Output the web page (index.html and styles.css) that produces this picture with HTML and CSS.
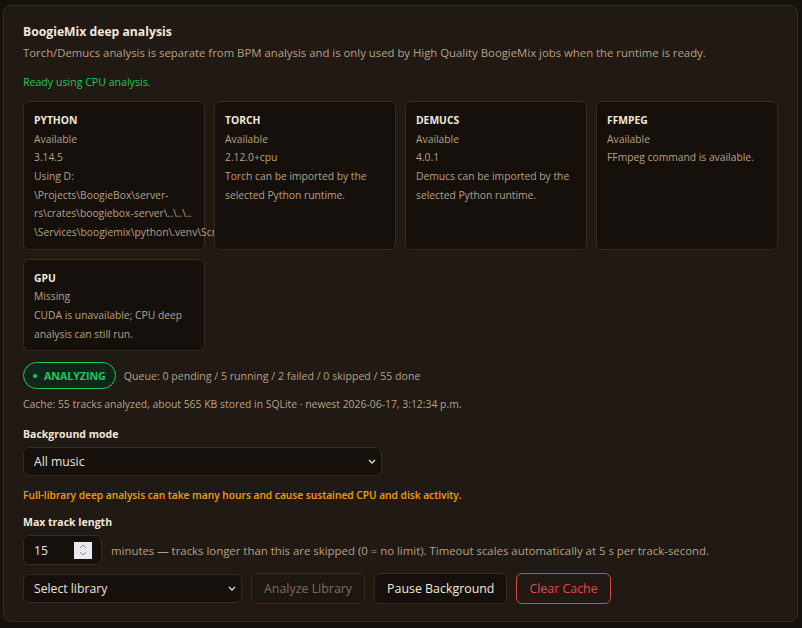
FILE: index.html
```html
<!DOCTYPE html>
<html lang="en">
<head>
  <meta charset="UTF-8">
  <meta name="viewport" content="width=device-width, initial-scale=1.0">
  <title>BoogieMix deep analysis</title>
  <link rel="stylesheet" href="styles.css">
</head>
<body>
<div class="page">
  <section class="panel">
    <h2 class="panel-title">BoogieMix deep analysis</h2>
    <p class="panel-desc">Torch/Demucs analysis is separate from BPM analysis and is only used by High Quality BoogieMix jobs when the runtime is ready.</p>
    <p class="ready">Ready using CPU analysis.</p>

    <div class="deps">
      <div class="dep">
        <div class="dep-name">PYTHON</div>
        <div>Available</div>
        <div>3.14.5</div>
        <div>Using D:<wbr>\Projects\BoogieBox\server-<wbr>rs\crates\boogiebox-server\..\..\..<wbr>\Services\boogiemix\python\.venv\Scripts\python.exe</div>
      </div>
      <div class="dep">
        <div class="dep-name">TORCH</div>
        <div>Available</div>
        <div>2.12.0+cpu</div>
        <div>Torch can be imported by the selected Python runtime.</div>
      </div>
      <div class="dep">
        <div class="dep-name">DEMUCS</div>
        <div>Available</div>
        <div>4.0.1</div>
        <div>Demucs can be imported by the selected Python runtime.</div>
      </div>
      <div class="dep">
        <div class="dep-name">FFMPEG</div>
        <div>Available</div>
        <div>FFmpeg command is available.</div>
      </div>
      <div class="dep">
        <div class="dep-name">GPU</div>
        <div>Missing</div>
        <div>CUDA is unavailable; CPU deep analysis can still run.</div>
      </div>
    </div>

    <div class="status-row">
      <span class="badge"><span class="dot"></span>ANALYZING</span>
      <span class="queue">Queue: 0 pending / 5 running / 2 failed / 0 skipped / 55 done</span>
    </div>
    <p class="cache">Cache: 55 tracks analyzed, about 565 KB stored in SQLite · newest 2026-06-17, 3:12:34 p.m.</p>

    <label class="field-label">Background mode</label>
    <div class="select-wrap mode-select">
      <select>
        <option>All music</option>
      </select>
      <svg class="chev" width="8" height="5" viewBox="0 0 8 5"><path d="M1 1l3 3 3-3" fill="none" stroke="currentColor" stroke-width="1.3"/></svg>
    </div>
    <p class="warning">Full-library deep analysis can take many hours and cause sustained CPU and disk activity.</p>

    <label class="field-label field-label--tight">Max track length</label>
    <div class="length-row">
      <div class="number-box">
        <input type="text" value="15">
        <span class="spin">
          <svg width="10" height="14" viewBox="0 0 10 14"><path d="M2 5l3-3 3 3M2 9l3 3 3-3" fill="none" stroke="#8d8d96" stroke-width="1"/></svg>
        </span>
      </div>
      <span class="hint">minutes — tracks longer than this are skipped (0 = no limit). Timeout scales automatically at 5 s per track-second.</span>
    </div>

    <div class="actions">
      <div class="select-wrap lib-select">
        <select>
          <option>Select library</option>
        </select>
        <svg class="chev" width="8" height="5" viewBox="0 0 8 5"><path d="M1 1l3 3 3-3" fill="none" stroke="currentColor" stroke-width="1.3"/></svg>
      </div>
      <button class="btn" disabled>Analyze Library</button>
      <button class="btn">Pause Background</button>
      <button class="btn danger">Clear Cache</button>
    </div>
  </section>
</div>
</body>
</html>
```

FILE: styles.css
```css
body {
  margin: 0;
  font-family: "Open Sans", "Noto Sans", sans-serif;
  background-color: #15110c;
  color: #b7a184;
}
.page {
  padding: 5px 4px 6px 3px;
}
.panel {
  background: #201914;
  border: 1px solid #3a2c1c;
  border-radius: 8px;
  padding: 16px 19px 17px;
}
.panel-title {
  margin: 0;
  font-size: 12.2px;
  line-height: 20px;
  font-weight: 700;
  color: #f2e8da;
}
.panel-desc {
  margin: 2px 0 0;
  font-size: 11.35px;
  line-height: 18px;
}
.ready {
  margin: 12px 0 0;
  font-size: 10.6px;
  line-height: 16px;
  color: #22c55e;
}
.deps {
  margin-top: 11px;
  display: grid;
  grid-template-columns: repeat(4, 1fr);
  gap: 9px;
}
.dep {
  background: #15100b;
  border: 1px solid #3a2c1c;
  border-radius: 6px;
  padding: 9px 10px 7px;
  font-size: 10.3px;
  line-height: 18.67px;
  min-width: 0;
}
.dep-name {
  font-weight: 700;
  color: #f2e8da;
}
.status-row {
  margin-top: 11px;
  display: flex;
  align-items: center;
  gap: 8px;
}
.badge {
  display: inline-flex;
  align-items: center;
  height: 25px;
  padding: 0 9px;
  border: 1px solid #22c55e;
  border-radius: 14px;
  background: #10261a;
  color: #22c55e;
  font-size: 10.6px;
  font-weight: 700;
}
.dot {
  width: 4px;
  height: 4px;
  border-radius: 50%;
  background: #22c55e;
  margin-right: 7px;
}
.queue {
  font-size: 10.6px;
}
.cache {
  margin: 7px 0 0;
  font-size: 10.4px;
  line-height: 16px;
}
.field-label {
  display: block;
  margin-top: 14px;
  font-size: 10.5px;
  line-height: 16px;
  font-weight: 700;
  color: #f2e8da;
}
.field-label--tight {
  margin-top: 11px;
}
.select-wrap {
  position: relative;
  margin-top: 5px;
}
.select-wrap select {
  appearance: none;
  width: 100%;
  height: 29px;
  padding: 0 10px;
  background: #15100b;
  border: 1px solid #3a2c1c;
  border-radius: 6px;
  color: #efe6d9;
  font-family: inherit;
  font-size: 12.2px;
}
.chev {
  position: absolute;
  right: 6px;
  top: 12px;
  color: #e8dfd2;
  pointer-events: none;
}
.mode-select {
  width: 359px;
}
.warning {
  margin: 11px 0 0;
  font-size: 10.2px;
  line-height: 16px;
  font-weight: 600;
  color: #f59e0b;
}
.length-row {
  margin-top: 5px;
  display: flex;
  align-items: center;
  gap: 9px;
}
.number-box {
  width: 79px;
  height: 30px;
  box-sizing: border-box;
  display: flex;
  align-items: center;
  background: #15100b;
  border: 1px solid #3a2c1c;
  border-radius: 6px;
  padding: 0 9px 0 10px;
}
.number-box input {
  width: 40px;
  flex: 1;
  background: none;
  border: none;
  outline: none;
  padding: 0;
  color: #efe6d9;
  font-family: inherit;
  font-size: 12.2px;
}
.spin {
  width: 18px;
  height: 17px;
  background: #e9e9ee;
  display: flex;
  align-items: center;
  justify-content: center;
}
.hint {
  font-size: 11.4px;
}
.actions {
  margin-top: 8px;
  display: flex;
  align-items: center;
  gap: 9px;
}
.actions .select-wrap {
  margin-top: 0;
}
.lib-select {
  width: 219px;
}
.btn {
  height: 31px;
  padding: 0 12px;
  background: #15100b;
  border: 1px solid #3a2c1c;
  border-radius: 6px;
  color: #f2e8da;
  font-family: inherit;
  font-size: 12.4px;
  cursor: pointer;
}
.btn:disabled {
  background: #1d1712;
  color: #7a6d5e;
  cursor: default;
}
.btn.danger {
  background: transparent;
  border-color: #d94848;
  color: #e5484d;
}
```
